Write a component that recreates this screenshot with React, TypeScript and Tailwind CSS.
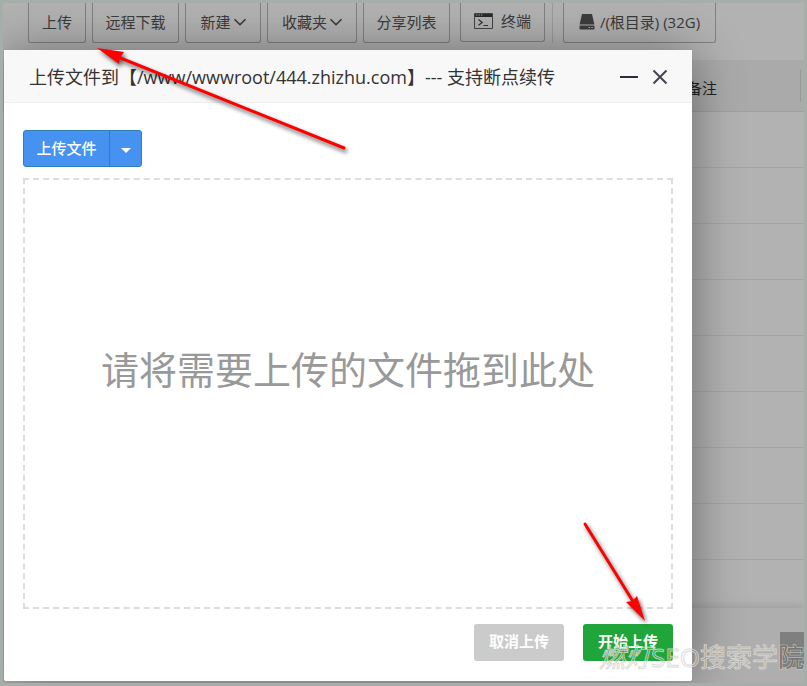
import type { ReactNode } from "react";

function ToolButton({ size, children }: { size: string; children: ReactNode }) {
  return (
    <button
      type="button"
      className={`flex shrink-0 items-center justify-center whitespace-nowrap rounded-b-[3px] border border-t-0 border-[#818181] pb-[2px] text-[15px] leading-5 text-[#3b3b3b] ${size}`}
    >
      {children}
    </button>
  );
}

function Chevron() {
  return (
    <svg className="ml-[3px] h-3 w-3" viewBox="0 0 12 12" fill="none" stroke="#333" strokeWidth="1.5" aria-hidden="true">
      <path d="M.5 3.2 6 8.8l5.5-5.6" />
    </svg>
  );
}

function Toolbar() {
  return (
    <div className="flex h-[57px] items-start gap-[6px] pl-[25px]">
      <ToolButton size="h-10 w-[58px]">上传</ToolButton>
      <ToolButton size="h-10 w-[87px]">远程下载</ToolButton>
      <ToolButton size="h-10 w-[76px]">
        新建
        <Chevron />
      </ToolButton>
      <ToolButton size="h-10 w-[90px]">
        收藏夹
        <Chevron />
      </ToolButton>
      <ToolButton size="h-10 w-[87px]">分享列表</ToolButton>
      <div className="ml-1 flex h-10 items-start border-r border-[#9b9b9b] pr-[7px]">
        <ToolButton size="h-[39px] w-[85px]">
          <svg className="mr-2 h-4 w-[19px]" viewBox="0 0 19 16" fill="none" aria-hidden="true">
            <path d="M.5.5h18v15H.5z" stroke="#454545" />
            <path d="M1 1h17v3H1z" fill="#292929" />
            <path d="M2 2h1.3M4.5 2h1.3M7 2h1.3" stroke="#aaa" />
            <path d="m4.5 6.5 3.7 3L4.5 12.3M9.5 12.5H14" stroke="#333" strokeWidth="1.2" />
          </svg>
          终端
        </ToolButton>
      </div>
      <div className="ml-1">
        <ToolButton size="h-10 w-[153px]">
          <svg className="mr-[5px] h-4 w-4" viewBox="0 0 16 16" aria-hidden="true">
            <path d="M3 0h10l2.4 10.5H.6z" fill="#3d3d3d" />
            <path d="M1.5 11.5h13a1 1 0 0 1 1 1v2a1 1 0 0 1-1 1h-13a1 1 0 0 1-1-1v-2a1 1 0 0 1 1-1z" fill="#3d3d3d" />
            <path d="M9.5 13.5H11M12.3 13.5h1.5" stroke="#b5b5b5" />
          </svg>
          /(根目录) (32G)
        </ToolButton>
      </div>
    </div>
  );
}

function FileTable() {
  return (
    <table className="w-full table-fixed border-collapse text-left">
      <thead>
        <tr className="h-[51px] border-b border-[#9f9f9f] bg-[#aaaaaa]">
          <th className="w-[684px]" />
          <th className="p-0 text-[15px] font-normal leading-7 text-[#222]">
            <div className="mr-[3px] mt-[2px] border-r border-[#999] pt-1">备注</div>
          </th>
        </tr>
      </thead>
      <tbody>
        {Array.from({ length: 8 }, (_, row) => (
          <tr key={row} className="h-14 border-b border-[#a5a5a5]">
            <td />
            <td />
          </tr>
        ))}
      </tbody>
    </table>
  );
}

function UploadDialog() {
  return (
    <section
      role="dialog"
      aria-labelledby="upload-title"
      className="absolute left-px top-[47px] flex w-[688px] flex-col rounded-[2px] bg-white shadow-[1px_1px_50px_rgba(0,0,0,0.4)]"
    >
      <header className="flex h-[53px] items-center border-b border-[#eee] bg-[#f8f8f8] pl-[25px] pr-6 pt-[2px]">
        <h1 id="upload-title" className="flex-1 whitespace-nowrap text-[18px] leading-6 text-[#333]">
          上传文件到【/www/wwwroot/444.zhizhu.com】--- 支持断点续传
        </h1>
        <button type="button" aria-label="最小化" className="mr-[14px] flex h-6 w-[18px] items-center">
          <span className="h-[2px] w-full bg-[#2d2c3b]" />
        </button>
        <button type="button" aria-label="关闭" className="h-4 w-4">
          <svg viewBox="0 0 16 16" fill="none" stroke="#45444f" strokeWidth="2" aria-hidden="true">
            <path d="m1.5 1.5 13 13M14.5 1.5l-13 13" />
          </svg>
        </button>
      </header>
      <div className="flex flex-col px-[19px] pb-5 pt-[27px]">
        <div className="flex h-[37px] self-start rounded-[3px] border border-[#2f7fb8] bg-[#4592f0] text-white">
          <button
            type="button"
            className="w-[86px] border-r border-[#2f7fb8] pb-[2px] text-[15px] font-medium leading-5"
          >
            上传文件
          </button>
          <button type="button" aria-label="更多上传方式" className="flex w-[31px] items-center justify-center">
            <span className="mt-1 border-x-[5px] border-t-[5px] border-x-transparent border-t-white" />
          </button>
        </div>
        <div className="mt-[11px] flex h-[431px] items-center justify-center border-2 border-dashed border-[#ddd] pb-[50px] text-[38px] leading-[48px] text-[#999]">
          请将需要上传的文件拖到此处
        </div>
        <div className="mt-[15px] flex justify-end gap-[19px] text-[15px] font-bold leading-5 text-white">
          <button type="button" className="h-[37px] w-[90px] rounded-[3px] bg-[#cbcbcb] pb-[3px]">
            取消上传
          </button>
          <button type="button" className="h-[37px] w-[90px] rounded-[3px] bg-[#20a53a] pb-[3px]">
            开始上传
          </button>
        </div>
      </div>
    </section>
  );
}

function Arrows() {
  return (
    <svg
      className="pointer-events-none absolute left-0 top-0 h-[686px] w-[807px] drop-shadow-[2px_3px_2px_rgba(0,0,0,0.6)]"
      viewBox="0 0 807 686"
      fill="#f00"
      stroke="#f00"
      aria-hidden="true"
    >
      <path d="M344 148 118 57" strokeWidth="3" strokeLinecap="round" />
      <path d="m97 48 27 4-4 6-1 6z" stroke="none" />
      <path d="m585 524 49 79" strokeWidth="3" strokeLinecap="round" />
      <path d="m645 621-19-19 6-1 5-5z" stroke="none" />
    </svg>
  );
}

export default function App() {
  return (
    <main className="relative h-screen overflow-hidden border-[3px] border-[#a6aeaa] bg-[#b2b2b2] font-['Open_Sans','Noto_Sans_CJK_SC',sans-serif]">
      <Toolbar />
      <FileTable />
      <footer className="absolute inset-x-0 bottom-0 flex h-[75px] items-center justify-end bg-[#aeaeae] shadow-[0_-2px_8px_rgba(0,0,0,0.12)]">
        <span className="mt-2 h-[35px] w-6 bg-[#7f7f7f]" />
      </footer>
      <UploadDialog />
      <div className="absolute -inset-[3px]">
        <Arrows />
      </div>
      <p className="pointer-events-none absolute bottom-2 right-0 whitespace-nowrap text-[26px] leading-9 text-transparent [-webkit-text-stroke:1px_rgba(215,215,210,0.9)]">
        <i>燃灯</i>SEO搜索学<span className="text-[#777] [paint-order:stroke]">院</span>
      </p>
    </main>
  );
}
